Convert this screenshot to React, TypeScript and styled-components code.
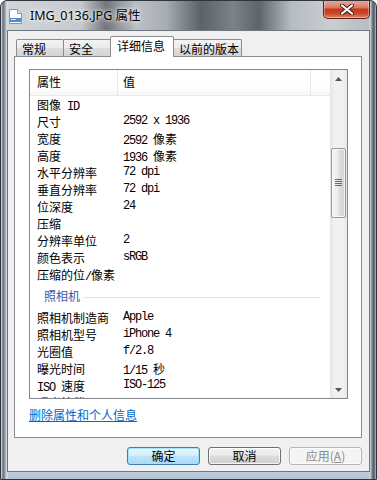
import React from 'react';
import styled, { createGlobalStyle } from 'styled-components';

const CJK = '"Noto Sans CJK SC", "Noto Sans", sans-serif';
const MONO = '"Liberation Mono", "Noto Sans CJK SC", monospace';

const GlobalStyle = createGlobalStyle`
  html, body {
    margin: 0;
    padding: 0;
    background: #fff;
  }
  body {
    font-family: ${CJK};
  }
`;

type Item = [string, string];

const imageRows: Item[] = [
  ['图像 ID', ''],
  ['尺寸', '2592 x 1936'],
  ['宽度', '2592 像素'],
  ['高度', '1936 像素'],
  ['水平分辨率', '72 dpi'],
  ['垂直分辨率', '72 dpi'],
  ['位深度', '24'],
  ['压缩', ''],
  ['分辨率单位', '2'],
  ['颜色表示', 'sRGB'],
  ['压缩的位/像素', ''],
];

const cameraRows: Item[] = [
  ['照相机制造商', 'Apple'],
  ['照相机型号', 'iPhone 4'],
  ['光圈值', 'f/2.8'],
  ['曝光时间', '1/15 秒'],
  ['ISO 速度', 'ISO-125'],
  ['曝光补偿', ''],
];

const tabs = [
  { label: '常规', width: 48 },
  { label: '安全', width: 48 },
  { label: '详细信息', width: 64, active: true },
  { label: '以前的版本', width: 69 },
];

const Window = styled.div`
  width: 377px;
  height: 480px;
  box-sizing: border-box;
  display: flex;
  flex-direction: column;
  border: 1px solid #2f353c;
  border-radius: 7px 7px 0 0;
  overflow: hidden;
  background:
    linear-gradient(90deg, #e3e9ee 0, #666d75 2px, #97a1aa 4px, #dce4ea 6px, rgba(0, 0, 0, 0) 7px,
      rgba(0, 0, 0, 0) 368px, #d6dee5 369px, #7c858d 371px, #4f565d 373px, #b9c2ca 375px),
    linear-gradient(180deg, rgba(0, 0, 0, 0) 0, rgba(0, 0, 0, 0) 430px, #c3d1de 468px, #b0c1d2 480px),
    linear-gradient(90deg, #d3d6d9 0, #c6c9cd 80px, #72767b 105px, #bcc0c5 135px, #a8adb2 165px,
      #5d6267 200px, #7d8288 232px, #5f646a 258px, #b7bcc1 290px, #cacdd1 330px, #b3b9bf 377px);
`;

const TitleBar = styled.div`
  flex: none;
  height: 29px;
  display: flex;
  align-items: flex-start;
  padding-left: 8px;
`;

const FileIcon = styled.svg`
  flex: none;
  margin-top: 8px;
`;

const Title = styled.div`
  margin: 7px 0 0 8px;
  font: 12.5px/16px "Noto Sans", "Noto Sans CJK SC", sans-serif;
  color: #000;
  text-shadow: 0 0 6px rgba(255, 255, 255, 0.95), 0 0 3px rgba(255, 255, 255, 0.9);
`;

const CloseButton = styled.div`
  margin: -1px 6px 0 auto;
  width: 47px;
  height: 19px;
  box-sizing: border-box;
  border: 1px solid #5a2218;
  border-top: none;
  border-radius: 0 0 5px 5px;
  background: linear-gradient(180deg, #e8b0a2 0%, #d97a63 42%, #c2391b 52%, #c8462a 75%, #df8868 100%);
  box-shadow: inset 0 0 0 1px rgba(255, 255, 255, 0.35);
  display: flex;
  align-items: center;
  justify-content: center;
`;

const Client = styled.div`
  flex: 1;
  margin: 0 6px 7px 6px;
  background: #f0f0f0;
  border: 1px solid #6e767e;
  display: flex;
  flex-direction: column;
  padding: 5px 7px 0 6px;
`;

const TabStrip = styled.div`
  height: 21px;
  margin-left: 2px;
  display: flex;
  align-items: flex-end;
  position: relative;
  z-index: 1;
`;

const Tab = styled.div<{ $active?: boolean; $width: number }>`
  box-sizing: border-box;
  width: ${(p) => p.$width}px;
  height: ${(p) => (p.$active ? 21 : 17)}px;
  margin: 0 -1px ${(p) => (p.$active ? 0 : 1)}px 0;
  padding: 1px 0 0 ${(p) => (p.$active ? 6 : 5)}px;
  border: 1px solid #898c95;
  border-bottom: none;
  border-radius: 2px 2px 0 0;
  position: relative;
  z-index: ${(p) => (p.$active ? 2 : 1)};
  background: ${(p) =>
    p.$active ? '#fff' : 'linear-gradient(180deg, #f3f3f3 0%, #ebebeb 50%, #dddddd 51%, #d4d4d4 100%)'};
  font: 12px/16px ${CJK};
  color: #000;
  white-space: nowrap;
`;

const Panel = styled.div`
  margin-top: -1px;
  height: 382px;
  box-sizing: border-box;
  border: 1px solid #898c95;
  background: #fff;
  padding: 12px 13px 0 14px;
  display: flex;
  flex-direction: column;
`;

const ListBox = styled.div`
  height: 330px;
  box-sizing: border-box;
  border: 1px solid #828790;
  display: flex;
  overflow: hidden;
`;

const ListContent = styled.div`
  flex: 1;
  overflow: hidden;
  display: flex;
  flex-direction: column;
`;

const Header = styled.div`
  flex: none;
  height: 26px;
  box-sizing: border-box;
  display: grid;
  grid-template-columns: 88px 193px 1fr;
  background: linear-gradient(180deg, #ffffff 0%, #ffffff 60%, #f6f7f9 100%);
  border-bottom: 1px solid #e5e8ec;
`;

const HeaderCell = styled.div<{ $pad: number; $divider?: boolean }>`
  padding: 3px 0 0 ${(p) => p.$pad}px;
  font: 12px/18px ${CJK};
  color: #000;
  border-right: ${(p) => (p.$divider ? '1px solid #e3e8ee' : 'none')};
`;

const Row = styled.div`
  flex: none;
  height: 17px;
  display: grid;
  grid-template-columns: 87px 1fr;
  overflow: hidden;
`;

const Cell = styled.div<{ $pad: number }>`
  padding-left: ${(p) => p.$pad}px;
  height: 17px;
  font-family: ${MONO};
  font-size: 12px;
  letter-spacing: -1.2px;
  line-height: 17px;
  white-space: pre;
  color: #000;
`;

const Han = styled.span`
  font-family: ${CJK};
  font-size: 12px;
  letter-spacing: 0;
`;

const Group = styled.div`
  flex: none;
  height: 26px;
  display: flex;
  align-items: center;
  padding: 0 10px 0 14px;
`;

const GroupTitle = styled.span`
  font: 12px/16px ${CJK};
  color: #3b5aa6;
`;

const GroupLine = styled.div`
  flex: 1;
  height: 1px;
  margin: 2px 0 0 3px;
  background: #e0e5ee;
`;

const ScrollBar = styled.div`
  flex: none;
  width: 17px;
  display: flex;
  flex-direction: column;
  background: linear-gradient(90deg, #e4e4e4 0%, #f1f1f1 25%, #f1f1f1 75%, #e8e8e8 100%);
`;

const ScrollArrow = styled.div`
  flex: none;
  height: 17px;
  display: flex;
  align-items: center;
  justify-content: center;
`;

const Track = styled.div`
  flex: 1;
`;

const Thumb = styled.div`
  margin: 61px 1px 0 1px;
  height: 70px;
  box-sizing: border-box;
  border: 1px solid #979797;
  border-radius: 2px;
  background: linear-gradient(90deg, #f5f5f5 0%, #ececec 45%, #dcdcdc 55%, #d3d3d3 100%);
  box-shadow: inset 0 0 0 1px rgba(255, 255, 255, 0.7);
  display: flex;
  align-items: center;
  justify-content: center;
`;

const Link = styled.span`
  align-self: flex-start;
  margin-top: 8px;
  font: 12px/16px ${CJK};
  color: #0066cc;
  text-decoration: underline;
`;

const ButtonRow = styled.div`
  margin-top: 9px;
  display: flex;
  justify-content: flex-end;
  gap: 8px;
`;

const Button = styled.div<{ $variant?: 'default' | 'disabled' }>`
  width: 73px;
  height: 18px;
  box-sizing: border-box;
  border-radius: 3px;
  display: flex;
  align-items: center;
  justify-content: center;
  font: 12px/16px ${CJK};
  border: 1px solid
    ${(p) => (p.$variant === 'default' ? '#3c7fb1' : p.$variant === 'disabled' ? '#b3b6b9' : '#707070')};
  color: ${(p) => (p.$variant === 'disabled' ? '#8b8b8b' : '#000')};
  background: ${(p) =>
    p.$variant === 'default'
      ? 'linear-gradient(180deg, #e8f5fc 0%, #d9f0fc 45%, #bee6fd 50%, #a7d9f5 100%)'
      : p.$variant === 'disabled'
      ? '#f4f4f4'
      : 'linear-gradient(180deg, #f2f2f2 0%, #ebebeb 45%, #dddddd 50%, #cfcfcf 100%)'};
  box-shadow: inset 0 0 0 1px
    ${(p) => (p.$variant === 'default' ? 'rgba(160, 225, 250, 0.9)' : 'rgba(255, 255, 255, 0.75)')};
`;

const Mixed = ({ text }: { text: string }) => (
  <>
    {text
      .split(/([\u4e00-\u9fff]+)/)
      .filter(Boolean)
      .map((part, i) =>
        /[\u4e00-\u9fff]/.test(part) ? <Han key={i}>{part}</Han> : <span key={i}>{part}</span>,
      )}
  </>
);

const PropRow = ({ item }: { item: Item }) => (
  <Row>
    <Cell $pad={7}>
      <Mixed text={item[0]} />
    </Cell>
    <Cell $pad={6}>
      <Mixed text={item[1]} />
    </Cell>
  </Row>
);

export default function App() {
  return (
    <>
      <GlobalStyle />
      <Window>
        <TitleBar>
          <FileIcon width="13" height="15" viewBox="0 0 13 15">
            <path d="M0.5 0.5 H8.5 L12.5 4.5 V14.5 H0.5 Z" fill="#fdfdfd" stroke="#8d959c" />
            <path d="M8.5 0.5 V4.5 H12.5" fill="#e4e8eb" stroke="#8d959c" />
            <rect x="1" y="9" width="11" height="4" fill="#4f8fcf" />
            <rect x="2" y="10" width="5" height="1" fill="#cfe3f5" />
          </FileIcon>
          <Title>IMG_0136.JPG 属性</Title>
          <CloseButton>
            <svg width="14" height="11" viewBox="0 0 14 11">
              <path d="M2 1.5 L12 9.5 M12 1.5 L2 9.5" stroke="#4a1a10" strokeWidth="4" strokeLinecap="round" />
              <path d="M2 1.5 L12 9.5 M12 1.5 L2 9.5" stroke="#fff" strokeWidth="2.2" strokeLinecap="round" />
            </svg>
          </CloseButton>
        </TitleBar>
        <Client>
          <TabStrip>
            {tabs.map((t) => (
              <Tab key={t.label} $active={t.active} $width={t.width}>
                {t.label}
              </Tab>
            ))}
          </TabStrip>
          <Panel>
            <ListBox>
              <ListContent>
                <Header>
                  <HeaderCell $pad={7} $divider>
                    属性
                  </HeaderCell>
                  <HeaderCell $pad={5} $divider>
                    值
                  </HeaderCell>
                  <HeaderCell $pad={0} />
                </Header>
                {imageRows.map((r) => (
                  <PropRow key={r[0]} item={r} />
                ))}
                <Group>
                  <GroupTitle>照相机</GroupTitle>
                  <GroupLine />
                </Group>
                {cameraRows.map((r) => (
                  <PropRow key={r[0]} item={r} />
                ))}
              </ListContent>
              <ScrollBar>
                <ScrollArrow>
                  <svg width="7" height="4" viewBox="0 0 7 4">
                    <path d="M3.5 0 L7 4 H0 Z" fill="#555" />
                  </svg>
                </ScrollArrow>
                <Track>
                  <Thumb>
                    <svg width="7" height="8" viewBox="0 0 7 8">
                      {[0, 2, 4, 6].map((y) => (
                        <rect key={y} x="0" y={y} width="7" height="1" fill="#6a6a6a" />
                      ))}
                    </svg>
                  </Thumb>
                </Track>
                <ScrollArrow>
                  <svg width="7" height="4" viewBox="0 0 7 4">
                    <path d="M0 0 H7 L3.5 4 Z" fill="#555" />
                  </svg>
                </ScrollArrow>
              </ScrollBar>
            </ListBox>
            <Link>删除属性和个人信息</Link>
          </Panel>
          <ButtonRow>
            <Button $variant="default">确定</Button>
            <Button>取消</Button>
            <Button $variant="disabled">
              应用(<u>A</u>)
            </Button>
          </ButtonRow>
        </Client>
      </Window>
    </>
  );
}
